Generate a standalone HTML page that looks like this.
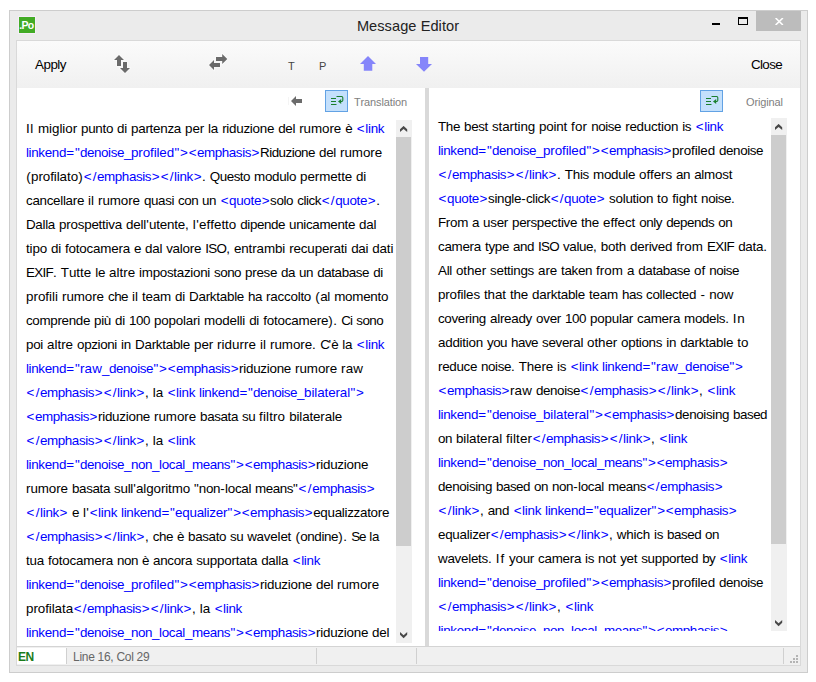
<!DOCTYPE html>
<html lang="en"><head><meta charset="utf-8"><title>Message Editor</title>
<style>
*{margin:0;padding:0;box-sizing:border-box}
html,body{width:816px;height:682px;background:#fff;overflow:hidden}
body{position:relative;font-family:"Liberation Sans",sans-serif;font-size:13px;color:#000}
.a{position:absolute}
#win{left:9px;top:10px;width:799px;height:663px;background:#ebebeb;border:1px solid #cdcdcd}
#ico{left:19px;top:17px;width:16px;height:16px;background:#42ab25;box-shadow:0 0 0 1px #f6eef8;color:#fff;font-weight:bold;font-size:10.5px;line-height:17px;letter-spacing:-0.75px;text-indent:0.3px;white-space:nowrap;overflow:hidden}
#title{left:0;top:15.7px;width:816px;text-align:center;font-size:14.6px;line-height:20px;color:#222;letter-spacing:0.06px}
#min{left:712px;top:23px;width:8px;height:2px;background:#000}
#max{left:738px;top:17px;width:10px;height:8px;border:1px solid #000;border-top-width:2px}
#cls{left:756px;top:11px;width:45px;height:20px;background:#bcbcbc}
#client{left:16px;top:40px;width:785px;height:626px;background:#fff;border:1px solid #d9d9d9}
#tb{left:17px;top:41px;width:783px;height:47px;background:linear-gradient(#fbfbfb,#f0f0f0)}
.tbt{font-size:13px;line-height:16px;color:#000;white-space:nowrap;font-kerning:none;font-variant-ligatures:none}
.tbt i,.hd i,.sm i{font-style:normal}
.sm{font-size:11px;line-height:12px;color:#444;white-space:nowrap}
.hd{font-size:11px;line-height:12px;color:#808080;white-space:nowrap;letter-spacing:-0.13px;font-kerning:none;font-variant-ligatures:none}
.wbtn{width:23px;height:22px;background:#c4e0fc;border:1px solid #62a2e4}
#split{left:425px;top:88px;width:4px;height:558px;background:#d9d9d9}
.sbt{background:#f0f0f0}
.sbh{background:#cdcdcd}
#lt{left:17px;top:120px;width:379px;height:523px;overflow:hidden}
#rt{left:429px;top:118px;width:342px;height:513px;overflow:hidden}
.ln{position:absolute;white-space:pre;height:24px;line-height:24px;font-size:13.4px;color:#000;font-kerning:none;font-variant-ligatures:none;word-spacing:0.28px}
.ln i{font-style:normal}
.ln b{font-weight:normal;color:#0000ff}
#sb{left:17px;top:646px;width:783px;height:19px;background:#f0f0f0;border-top:1px solid #d4d4d4}
.sep{width:1px;background:#d0d0d0;top:648px;height:16px}
.st{font-size:12px;line-height:14px;white-space:nowrap}
.g{width:2px;height:2px;background:#b4b4b4}

</style></head>
<body>
<div id="win" class="a"></div>
<div id="ico" class="a">.Po</div>
<div id="title" class="a">Message Editor</div>
<div id="min" class="a"></div>
<div id="max" class="a"></div>
<div id="cls" class="a"></div>
<svg class="a" style="left:775px;top:18px" width="9" height="7" viewBox="0 0 9 7"><path d="M0.6 0 L7.9 7 M7.9 0 L0.6 7" stroke="#fff" stroke-width="1.6" fill="none"/></svg>
<div id="client" class="a"></div>
<div id="tb" class="a"></div>
<div class="a tbt" style="left:35px;top:57px"><span style="font-size:13.4px;word-spacing:0.28px"><i style="letter-spacing:-0.5px">Apply</i></span></div>
<div class="a tbt" style="left:751px;top:57px"><span style="font-size:13.4px;word-spacing:0.28px"><i style="letter-spacing:-0.65px">Close</i></span></div>
<!-- up/down swap icon -->
<svg class="a" style="left:110px;top:50px" width="24" height="28" viewBox="110 50 24 28">
 <g fill="#6b6b6b" stroke="#ffffff" stroke-opacity="0.7" stroke-width="1.2" paint-order="stroke">
  <path d="M119 55 L124 60 L121 60 L121 66 L117 66 L117 60 L114 60 Z"/>
  <path d="M125 73 L120 68 L123 68 L123 62 L127 62 L127 68 L130 68 Z"/>
 </g>
</svg>
<!-- left/right swap icon -->
<svg class="a" style="left:204px;top:50px" width="28" height="24" viewBox="204 50 28 24">
 <g fill="#6b6b6b" stroke="#ffffff" stroke-opacity="0.7" stroke-width="1.2" paint-order="stroke">
  <path d="M227.3 59 L222.2 54 L222.2 57 L216 57 L216 61 L222.2 61 L222.2 64 Z"/>
  <path d="M209 65 L214 60 L214 63 L220 63 L220 67 L214 67 L214 70 Z"/>
 </g>
</svg>
<div class="a sm" style="left:288px;top:60px">T</div>
<div class="a sm" style="left:319px;top:60px">P</div>
<svg class="a" style="left:358px;top:54px" width="20" height="20" viewBox="358 54 20 20">
 <path d="M368 56 L376 64 L372.3 64 L372.3 70.7 L363.8 70.7 L363.8 64 L360 64 Z" fill="#8585fa"/>
</svg>
<svg class="a" style="left:414px;top:54px" width="20" height="20" viewBox="414 54 20 20">
 <path d="M424 71.7 L416 64 L420 64 L420 57 L428.2 57 L428.2 64 L432 64 Z" fill="#8585fa"/>
</svg>
<!-- pane headers -->
<svg class="a" style="left:288px;top:94px" width="16" height="14" viewBox="288 94 16 14">
 <path d="M291 101 L296 96 L296 99 L302 99 L302 103 L296 103 L296 106 Z" fill="#6b6b6b"/>
</svg>
<div class="a" style="left:288px;top:97px;width:1px;height:8px;background:#f4f4f4"></div>
<div class="a wbtn" style="left:325px;top:90px"></div>
<svg class="a" style="left:325px;top:90px" width="23" height="22" viewBox="0 0 23 22">
 <g stroke="#1a7f2e" stroke-width="1.1" fill="none">
  <path d="M6 8.5 H11 M6 11.5 H11 M6 14.5 H11.5"/>
  <path d="M11.5 6.5 H16.6 Q17.8 6.5 17.8 7.7 V10.3 Q17.8 11.5 16.6 11.5 H15"/>
 </g>
 <path d="M13 11.5 L16.2 8.9 V14.1 Z" fill="#1a7f2e"/>
</svg>
<div class="a hd" style="left:354px;top:96px">Translation</div>
<div class="a wbtn" style="left:700px;top:90px"></div>
<svg class="a" style="left:700px;top:90px" width="23" height="22" viewBox="0 0 23 22">
 <g stroke="#1a7f2e" stroke-width="1.1" fill="none">
  <path d="M6 8.5 H11 M6 11.5 H11 M6 14.5 H11.5"/>
  <path d="M11.5 6.5 H16.6 Q17.8 6.5 17.8 7.7 V10.3 Q17.8 11.5 16.6 11.5 H15"/>
 </g>
 <path d="M13 11.5 L16.2 8.9 V14.1 Z" fill="#1a7f2e"/>
</svg>
<div class="a hd" style="left:746px;top:96px">Original</div>
<div id="split" class="a"></div>
<!-- left scrollbar -->
<div class="a sbt" style="left:396px;top:120px;width:16px;height:523px"></div>
<div class="a sbh" style="left:396px;top:137px;width:15px;height:409px"></div>
<!-- right scrollbar -->
<div class="a sbt" style="left:771px;top:118px;width:16px;height:513px"></div>
<div class="a sbh" style="left:771px;top:135px;width:15px;height:409px"></div>
<svg class="a" style="left:399.8px;top:126px" width="8" height="7" viewBox="0 0 8 7"><path d="M3.6 -0.1 L7.2 3.3 V6.1 L3.6 2.9 L0 6.1 V3.3 Z" fill="#484848"/></svg>
<svg class="a" style="left:399.8px;top:632px" width="8" height="7" viewBox="0 0 8 7"><path d="M0 0 V2.8 L3.6 6.2 L7.2 2.8 V0 L3.6 3.2 Z" fill="#484848"/></svg>
<svg class="a" style="left:774.9px;top:124px" width="8" height="7" viewBox="0 0 8 7"><path d="M3.6 -0.1 L7.2 3.3 V6.1 L3.6 2.9 L0 6.1 V3.3 Z" fill="#484848"/></svg>
<svg class="a" style="left:774.9px;top:619.8px" width="8" height="7" viewBox="0 0 8 7"><path d="M0 0 V2.8 L3.6 6.2 L7.2 2.8 V0 L3.6 3.2 Z" fill="#484848"/></svg>
<div id="lt" class="a">
<div class="ln" style="left:9px;top:-3.5px"><i style="letter-spacing:0.65px">Il</i> <i style="letter-spacing:-0.06px">miglior</i> <i style="letter-spacing:-0.3px">punto</i> <i style="letter-spacing:-0.22px">di</i> <i style="letter-spacing:-0.27px">partenza</i> <i style="letter-spacing:-0.11px">per</i> <i style="letter-spacing:-0.21px">la</i> <i style="letter-spacing:-0.26px">riduzione</i> <i style="letter-spacing:-0.29px">del</i> <i style="letter-spacing:-0.07px">rumore</i> <i style="letter-spacing:-0.44px">è</i> <b><i style="letter-spacing:1.17px;margin:0 -0.58px 0 0.58px">&lt;</i><i style="letter-spacing:-0.27px">link</i></b></div>
<div class="ln" style="left:9px;top:20.5px"><b><i style="letter-spacing:-0.35px">linkend</i><i style="letter-spacing:0.72px;margin:0 -0.36px 0 0.36px">="</i><i style="letter-spacing:-0.42px">denoise</i><i style="letter-spacing:-0.42px">_</i><i style="letter-spacing:-0.11px">profiled</i><i style="letter-spacing:0.86px;margin:0 -0.43px 0 0.43px">"&gt;&lt;</i><i style="letter-spacing:-0.42px">emphasis</i><i style="letter-spacing:1.22px;margin:0 -0.61px 0 0.61px">&gt;</i></b><i style="letter-spacing:-0.51px">Riduzione</i> <i style="letter-spacing:-0.28px">del</i> <i style="letter-spacing:-0.07px">rumore</i></div>
<div class="ln" style="left:9px;top:44.5px"><i style="letter-spacing:0.54px;margin:0 -0.27px 0 0.27px">(</i><i style="letter-spacing:-0.07px">profilato</i><i style="letter-spacing:0.53px;margin:0 -0.27px 0 0.27px">)</i><b><i style="letter-spacing:1.23px;margin:0 -0.61px 0 0.61px">&lt;/</i><i style="letter-spacing:-0.41px">emphasis</i><i style="letter-spacing:1.2px;margin:0 -0.6px 0 0.6px">&gt;&lt;/</i><i style="letter-spacing:-0.27px">link</i><i style="letter-spacing:1.17px;margin:0 -0.58px 0 0.58px">&gt;</i></b>. <i style="letter-spacing:-0.48px">Questo</i> <i style="letter-spacing:-0.32px">modulo</i> <i style="letter-spacing:-0.11px">permette</i> <i style="letter-spacing:-0.2px">di</i></div>
<div class="ln" style="left:9px;top:68.5px"><i style="letter-spacing:-0.3px">cancellare</i> il <i style="letter-spacing:-0.07px">rumore</i> <i style="letter-spacing:-0.4px">quasi</i> <i style="letter-spacing:-0.53px">con</i> <i style="letter-spacing:-0.45px">un</i> <b><i style="letter-spacing:1.18px;margin:0 -0.59px 0 0.59px">&lt;</i><i style="letter-spacing:-0.3px">quote</i><i style="letter-spacing:1.17px;margin:0 -0.58px 0 0.58px">&gt;</i></b><i style="letter-spacing:-0.39px">solo</i> <i style="letter-spacing:-0.41px">click</i><b><i style="letter-spacing:1.23px;margin:0 -0.61px 0 0.61px">&lt;/</i><i style="letter-spacing:-0.3px">quote</i><i style="letter-spacing:1.17px;margin:0 -0.58px 0 0.58px">&gt;</i></b>.</div>
<div class="ln" style="left:9px;top:92.5px"><i style="letter-spacing:-0.3px">Dalla</i> <i style="letter-spacing:-0.23px">prospettiva</i> <i style="letter-spacing:-0.21px">dell</i><i style="letter-spacing:0.44px;margin:0 -0.22px 0 0.22px">'</i><i style="letter-spacing:-0.2px">utente</i>, l<i style="letter-spacing:0.72px;margin:0 -0.36px 0 0.36px">'</i>effetto <i style="letter-spacing:-0.41px">dipende</i> <i style="letter-spacing:-0.33px">unicamente</i> <i style="letter-spacing:-0.28px">dal</i></div>
<div class="ln" style="left:9px;top:116.5px"><i style="letter-spacing:-0.15px">tipo</i> <i style="letter-spacing:-0.21px">di</i> <i style="letter-spacing:-0.2px">fotocamera</i> <i style="letter-spacing:-0.43px">e</i> <i style="letter-spacing:-0.29px">dal</i> <i style="letter-spacing:-0.25px">valore</i> <i style="letter-spacing:-0.68px">ISO</i>, <i style="letter-spacing:-0.1px">entrambi</i> <i style="letter-spacing:-0.16px">recuperati</i> <i style="letter-spacing:-0.28px">dai</i> <i style="letter-spacing:-0.15px">dati</i></div>
<div class="ln" style="left:9px;top:140.5px"><i style="letter-spacing:-0.69px">EXIF</i>. Tutte <i style="letter-spacing:-0.33px">le</i> altre <i style="letter-spacing:-0.29px">impostazioni</i> <i style="letter-spacing:-0.51px">sono</i> <i style="letter-spacing:-0.3px">prese</i> <i style="letter-spacing:-0.45px">da</i> <i style="letter-spacing:-0.45px">un</i> <i style="letter-spacing:-0.39px">database</i> <i style="letter-spacing:-0.2px">di</i></div>
<div class="ln" style="left:9px;top:164.5px">profili <i style="letter-spacing:-0.07px">rumore</i> <i style="letter-spacing:-0.53px">che</i> il <i style="letter-spacing:-0.18px">team</i> <i style="letter-spacing:-0.21px">di</i> <i style="letter-spacing:-0.26px">Darktable</i> <i style="letter-spacing:-0.44px">ha</i> <i style="letter-spacing:-0.24px">raccolto</i> <i style="letter-spacing:0.57px;margin:0 -0.28px 0 0.28px">(</i><i style="letter-spacing:-0.21px">al</i> <i style="letter-spacing:-0.26px">momento</i></div>
<div class="ln" style="left:9px;top:188.5px"><i style="letter-spacing:-0.33px">comprende</i> <i style="letter-spacing:-0.3px">più</i> <i style="letter-spacing:-0.21px">di</i> <i style="letter-spacing:-0.45px">100</i> <i style="letter-spacing:-0.21px">popolari</i> <i style="letter-spacing:-0.2px">modelli</i> <i style="letter-spacing:-0.21px">di</i> <i style="letter-spacing:-0.2px">fotocamere</i><i style="letter-spacing:0.42px;margin:0 -0.21px 0 0.21px">).</i> <i style="letter-spacing:-0.82px">Ci</i> <i style="letter-spacing:-0.51px">sono</i></div>
<div class="ln" style="left:9px;top:212.5px"><i style="letter-spacing:-0.29px">poi</i> altre <i style="letter-spacing:-0.36px">opzioni</i> <i style="letter-spacing:-0.2px">in</i> <i style="letter-spacing:-0.26px">Darktable</i> <i style="letter-spacing:-0.11px">per</i> <i style="letter-spacing:0.04px">ridurre</i> il <i style="letter-spacing:-0.06px">rumore</i><i style="letter-spacing:0.3px">.</i> <i style="letter-spacing:-1.67px">C</i><i style="letter-spacing:0.44px;margin:0 -0.22px 0 0.22px">'</i><i style="letter-spacing:-0.44px">è</i> <i style="letter-spacing:-0.21px">la</i> <b><i style="letter-spacing:1.17px;margin:0 -0.58px 0 0.58px">&lt;</i><i style="letter-spacing:-0.27px">link</i></b></div>
<div class="ln" style="left:9px;top:236.5px"><b><i style="letter-spacing:-0.35px">linkend</i><i style="letter-spacing:0.72px;margin:0 -0.36px 0 0.36px">="</i><i style="letter-spacing:0.14px">raw</i><i style="letter-spacing:-0.45px">_</i><i style="letter-spacing:-0.41px">denoise</i><i style="letter-spacing:0.86px;margin:0 -0.43px 0 0.43px">"&gt;&lt;</i><i style="letter-spacing:-0.41px">emphasis</i><i style="letter-spacing:1.14px;margin:0 -0.57px 0 0.57px">&gt;</i></b><i style="letter-spacing:-0.26px">riduzione</i> <i style="letter-spacing:-0.07px">rumore</i> <i style="letter-spacing:0.14px">raw</i></div>
<div class="ln" style="left:9px;top:260.5px"><b><i style="letter-spacing:1.23px;margin:0 -0.61px 0 0.61px">&lt;/</i><i style="letter-spacing:-0.41px">emphasis</i><i style="letter-spacing:1.2px;margin:0 -0.6px 0 0.6px">&gt;&lt;/</i><i style="letter-spacing:-0.27px">link</i><i style="letter-spacing:1.17px;margin:0 -0.58px 0 0.58px">&gt;</i></b>, la <b><i style="letter-spacing:1.04px;margin:0 -0.52px 0 0.52px">&lt;</i><i style="letter-spacing:-0.27px">link</i> <i style="letter-spacing:-0.35px">linkend</i><i style="letter-spacing:0.71px;margin:0 -0.35px 0 0.35px">="</i><i style="letter-spacing:-0.42px">denoise</i><i style="letter-spacing:-0.41px">_</i><i style="letter-spacing:-0.1px">bilateral</i><i style="letter-spacing:0.71px;margin:0 -0.35px 0 0.35px">"&gt;</i></b></div>
<div class="ln" style="left:9px;top:284.5px"><b><i style="letter-spacing:1.18px;margin:0 -0.59px 0 0.59px">&lt;</i><i style="letter-spacing:-0.41px">emphasis</i><i style="letter-spacing:1.15px;margin:0 -0.57px 0 0.57px">&gt;</i></b><i style="letter-spacing:-0.26px">riduzione</i> <i style="letter-spacing:-0.07px">rumore</i> <i style="letter-spacing:-0.37px">basata</i> <i style="letter-spacing:-0.57px">su</i> <i style="letter-spacing:0.12px">filtro</i> <i style="letter-spacing:-0.14px">bilaterale</i></div>
<div class="ln" style="left:9px;top:308.5px"><b><i style="letter-spacing:1.23px;margin:0 -0.61px 0 0.61px">&lt;/</i><i style="letter-spacing:-0.41px">emphasis</i><i style="letter-spacing:1.2px;margin:0 -0.6px 0 0.6px">&gt;&lt;/</i><i style="letter-spacing:-0.27px">link</i><i style="letter-spacing:1.17px;margin:0 -0.58px 0 0.58px">&gt;</i></b>, la <b><i style="letter-spacing:1.04px;margin:0 -0.52px 0 0.52px">&lt;</i><i style="letter-spacing:-0.27px">link</i></b></div>
<div class="ln" style="left:9px;top:332.5px"><b><i style="letter-spacing:-0.35px">linkend</i><i style="letter-spacing:0.72px;margin:0 -0.36px 0 0.36px">="</i><i style="letter-spacing:-0.42px">denoise</i><i style="letter-spacing:-0.42px">_</i><i style="letter-spacing:-0.45px">non</i><i style="letter-spacing:-0.44px">_</i><i style="letter-spacing:-0.31px">local</i><i style="letter-spacing:-0.44px">_</i><i style="letter-spacing:-0.44px">means</i><i style="letter-spacing:0.87px;margin:0 -0.43px 0 0.43px">"&gt;&lt;</i><i style="letter-spacing:-0.41px">emphasis</i><i style="letter-spacing:1.16px;margin:0 -0.58px 0 0.58px">&gt;</i></b><i style="letter-spacing:-0.26px">riduzione</i></div>
<div class="ln" style="left:9px;top:356.5px"><i style="letter-spacing:-0.07px">rumore</i> <i style="letter-spacing:-0.37px">basata</i> <i style="letter-spacing:-0.27px">sull</i><i style="letter-spacing:0.44px;margin:0 -0.22px 0 0.22px">'</i><i style="letter-spacing:-0.12px">algoritmo</i> "<i style="letter-spacing:-0.36px">non</i><i style="letter-spacing:0.53px;margin:0 -0.27px 0 0.27px">-</i><i style="letter-spacing:-0.31px">local</i> <i style="letter-spacing:-0.44px">means</i>"<b><i style="letter-spacing:1.36px;margin:0 -0.68px 0 0.68px">&lt;/</i><i style="letter-spacing:-0.41px">emphasis</i><i style="letter-spacing:1.15px;margin:0 -0.57px 0 0.57px">&gt;</i></b></div>
<div class="ln" style="left:9px;top:380.5px"><b><i style="letter-spacing:1.23px;margin:0 -0.61px 0 0.61px">&lt;/</i><i style="letter-spacing:-0.27px">link</i><i style="letter-spacing:1.17px;margin:0 -0.58px 0 0.58px">&gt;</i></b> <i style="letter-spacing:-0.45px">e</i> l<i style="letter-spacing:0.46px;margin:0 -0.23px 0 0.23px">'</i><b><i style="letter-spacing:1.18px;margin:0 -0.59px 0 0.59px">&lt;</i><i style="letter-spacing:-0.27px">link</i> <i style="letter-spacing:-0.35px">linkend</i><i style="letter-spacing:0.71px;margin:0 -0.35px 0 0.35px">="</i><i style="letter-spacing:-0.26px">equalizer</i><i style="letter-spacing:0.87px;margin:0 -0.43px 0 0.43px">"&gt;&lt;</i><i style="letter-spacing:-0.41px">emphasis</i><i style="letter-spacing:1.15px;margin:0 -0.57px 0 0.57px">&gt;</i></b><i style="letter-spacing:-0.28px">equalizzatore</i></div>
<div class="ln" style="left:9px;top:404.5px"><b><i style="letter-spacing:1.23px;margin:0 -0.61px 0 0.61px">&lt;/</i><i style="letter-spacing:-0.41px">emphasis</i><i style="letter-spacing:1.2px;margin:0 -0.6px 0 0.6px">&gt;&lt;/</i><i style="letter-spacing:-0.27px">link</i><i style="letter-spacing:1.17px;margin:0 -0.58px 0 0.58px">&gt;</i></b>, <i style="letter-spacing:-0.44px">che</i> <i style="letter-spacing:-0.44px">è</i> <i style="letter-spacing:-0.37px">basato</i> <i style="letter-spacing:-0.57px">su</i> <i style="letter-spacing:-0.2px">wavelet</i> <i style="letter-spacing:0.54px;margin:0 -0.27px 0 0.27px">(</i><i style="letter-spacing:-0.37px">ondine</i><i style="letter-spacing:0.41px;margin:0 -0.2px 0 0.2px">).</i> <i style="letter-spacing:-1.19px">Se</i> <i style="letter-spacing:-0.21px">la</i></div>
<div class="ln" style="left:9px;top:428.5px"><i style="letter-spacing:-0.21px">tua</i> <i style="letter-spacing:-0.2px">fotocamera</i> <i style="letter-spacing:-0.44px">non</i> <i style="letter-spacing:-0.45px">è</i> <i style="letter-spacing:-0.32px">ancora</i> <i style="letter-spacing:-0.23px">supportata</i> <i style="letter-spacing:-0.26px">dalla</i> <b><i style="letter-spacing:1.17px;margin:0 -0.58px 0 0.58px">&lt;</i><i style="letter-spacing:-0.27px">link</i></b></div>
<div class="ln" style="left:9px;top:452.5px"><b><i style="letter-spacing:-0.35px">linkend</i><i style="letter-spacing:0.72px;margin:0 -0.36px 0 0.36px">="</i><i style="letter-spacing:-0.42px">denoise</i><i style="letter-spacing:-0.42px">_</i><i style="letter-spacing:-0.11px">profiled</i><i style="letter-spacing:0.86px;margin:0 -0.43px 0 0.43px">"&gt;&lt;</i><i style="letter-spacing:-0.42px">emphasis</i><i style="letter-spacing:1.22px;margin:0 -0.61px 0 0.61px">&gt;</i></b><i style="letter-spacing:-0.26px">riduzione</i> <i style="letter-spacing:-0.29px">del</i> <i style="letter-spacing:-0.07px">rumore</i></div>
<div class="ln" style="left:9px;top:476.5px"><i style="letter-spacing:-0.07px">profilata</i><b><i style="letter-spacing:1.22px;margin:0 -0.61px 0 0.61px">&lt;/</i><i style="letter-spacing:-0.41px">emphasis</i><i style="letter-spacing:1.2px;margin:0 -0.6px 0 0.6px">&gt;&lt;/</i><i style="letter-spacing:-0.27px">link</i><i style="letter-spacing:1.18px;margin:0 -0.59px 0 0.59px">&gt;</i></b>, la <b><i style="letter-spacing:1.03px;margin:0 -0.52px 0 0.52px">&lt;</i><i style="letter-spacing:-0.27px">link</i></b></div>
<div class="ln" style="left:9px;top:500.5px"><b><i style="letter-spacing:-0.35px">linkend</i><i style="letter-spacing:0.72px;margin:0 -0.36px 0 0.36px">="</i><i style="letter-spacing:-0.42px">denoise</i><i style="letter-spacing:-0.42px">_</i><i style="letter-spacing:-0.45px">non</i><i style="letter-spacing:-0.44px">_</i><i style="letter-spacing:-0.31px">local</i><i style="letter-spacing:-0.44px">_</i><i style="letter-spacing:-0.44px">means</i><i style="letter-spacing:0.87px;margin:0 -0.43px 0 0.43px">"&gt;&lt;</i><i style="letter-spacing:-0.41px">emphasis</i><i style="letter-spacing:1.16px;margin:0 -0.58px 0 0.58px">&gt;</i></b><i style="letter-spacing:-0.26px">riduzione</i> <i style="letter-spacing:-0.29px">del</i></div>
</div>
<div id="rt" class="a">
<div class="ln" style="left:9px;top:-3.5px"><i style="letter-spacing:-0.36px">The</i> <i style="letter-spacing:-0.33px">best</i> <i style="letter-spacing:-0.11px">starting</i> <i style="letter-spacing:-0.21px">point</i> <i style="letter-spacing:0.12px">for</i> <i style="letter-spacing:-0.4px">noise</i> <i style="letter-spacing:-0.23px">reduction</i> <i style="letter-spacing:-0.35px">is</i> <b><i style="letter-spacing:1.17px;margin:0 -0.58px 0 0.58px">&lt;</i><i style="letter-spacing:-0.27px">link</i></b></div>
<div class="ln" style="left:9px;top:20.5px"><b><i style="letter-spacing:-0.35px">linkend</i><i style="letter-spacing:0.72px;margin:0 -0.36px 0 0.36px">="</i><i style="letter-spacing:-0.42px">denoise</i><i style="letter-spacing:-0.42px">_</i><i style="letter-spacing:-0.11px">profiled</i><i style="letter-spacing:0.86px;margin:0 -0.43px 0 0.43px">"&gt;&lt;</i><i style="letter-spacing:-0.42px">emphasis</i><i style="letter-spacing:1.22px;margin:0 -0.61px 0 0.61px">&gt;</i></b><i style="letter-spacing:-0.12px">profiled</i> <i style="letter-spacing:-0.41px">denoise</i></div>
<div class="ln" style="left:9px;top:44.5px"><b><i style="letter-spacing:1.23px;margin:0 -0.61px 0 0.61px">&lt;/</i><i style="letter-spacing:-0.41px">emphasis</i><i style="letter-spacing:1.2px;margin:0 -0.6px 0 0.6px">&gt;&lt;/</i><i style="letter-spacing:-0.27px">link</i><i style="letter-spacing:1.17px;margin:0 -0.58px 0 0.58px">&gt;</i></b>. <i style="letter-spacing:-0.25px">This</i> <i style="letter-spacing:-0.32px">module</i> <i style="letter-spacing:-0.09px">offers</i> <i style="letter-spacing:-0.43px">an</i> <i style="letter-spacing:-0.24px">almost</i></div>
<div class="ln" style="left:9px;top:68.5px"><b><i style="letter-spacing:1.18px;margin:0 -0.59px 0 0.59px">&lt;</i><i style="letter-spacing:-0.3px">quote</i><i style="letter-spacing:1.17px;margin:0 -0.58px 0 0.58px">&gt;</i></b><i style="letter-spacing:-0.33px">single</i><i style="letter-spacing:0.53px;margin:0 -0.27px 0 0.27px">-</i><i style="letter-spacing:-0.41px">click</i><b><i style="letter-spacing:1.24px;margin:0 -0.62px 0 0.62px">&lt;/</i><i style="letter-spacing:-0.3px">quote</i><i style="letter-spacing:1.16px;margin:0 -0.58px 0 0.58px">&gt;</i></b> <i style="letter-spacing:-0.27px">solution</i> to <i style="letter-spacing:-0.1px">fight</i> <i style="letter-spacing:-0.4px">noise</i>.</div>
<div class="ln" style="left:9px;top:92.5px"><i style="letter-spacing:-0.31px">From</i> <i style="letter-spacing:-0.45px">a</i> <i style="letter-spacing:-0.26px">user</i> <i style="letter-spacing:-0.32px">perspective</i> <i style="letter-spacing:-0.2px">the</i> <i style="letter-spacing:-0.12px">effect</i> <i style="letter-spacing:-0.4px">only</i> <i style="letter-spacing:-0.48px">depends</i> <i style="letter-spacing:-0.45px">on</i></div>
<div class="ln" style="left:9px;top:116.5px"><i style="letter-spacing:-0.28px">camera</i> <i style="letter-spacing:-0.32px">type</i> <i style="letter-spacing:-0.45px">and</i> <i style="letter-spacing:-0.69px">ISO</i> <i style="letter-spacing:-0.4px">value</i>, <i style="letter-spacing:-0.2px">both</i> <i style="letter-spacing:-0.27px">derived</i> from <i style="letter-spacing:-0.65px">EXIF</i> <i style="letter-spacing:-0.26px">data</i>.</div>
<div class="ln" style="left:9px;top:140.5px"><i style="letter-spacing:-0.29px">All</i> <i style="letter-spacing:-0.11px">other</i> <i style="letter-spacing:-0.27px">settings</i> <i style="letter-spacing:-0.11px">are</i> <i style="letter-spacing:-0.35px">taken</i> from a <i style="letter-spacing:-0.42px">database</i> of <i style="letter-spacing:-0.43px">noise</i></div>
<div class="ln" style="left:9px;top:164.5px"><i style="letter-spacing:-0.15px">profiles</i> <i style="letter-spacing:-0.08px">that</i> <i style="letter-spacing:-0.2px">the</i> <i style="letter-spacing:-0.23px">darktable</i> <i style="letter-spacing:-0.2px">team</i> <i style="letter-spacing:-0.53px">has</i> <i style="letter-spacing:-0.32px">collected</i> <i style="letter-spacing:0.57px;margin:0 -0.28px 0 0.28px">-</i> <i style="letter-spacing:-0.19px">now</i></div>
<div class="ln" style="left:9px;top:188.5px"><i style="letter-spacing:-0.33px">covering</i> <i style="letter-spacing:-0.27px">already</i> <i style="letter-spacing:-0.26px">over</i> <i style="letter-spacing:-0.45px">100</i> <i style="letter-spacing:-0.24px">popular</i> <i style="letter-spacing:-0.28px">camera</i> <i style="letter-spacing:-0.36px">models</i>. <i style="letter-spacing:0.56px">In</i></div>
<div class="ln" style="left:9px;top:212.5px"><i style="letter-spacing:-0.24px">addition</i> <i style="letter-spacing:-0.53px">you</i> <i style="letter-spacing:-0.51px">have</i> <i style="letter-spacing:-0.31px">several</i> <i style="letter-spacing:-0.1px">other</i> <i style="letter-spacing:-0.31px">options</i> <i style="letter-spacing:-0.23px">in</i> <i style="letter-spacing:-0.23px">darktable</i> to</div>
<div class="ln" style="left:9px;top:236.5px"><i style="letter-spacing:-0.32px">reduce</i> <i style="letter-spacing:-0.41px">noise</i>. <i style="letter-spacing:-0.14px">There</i> <i style="letter-spacing:-0.33px">is</i> <b><i style="letter-spacing:1.17px;margin:0 -0.58px 0 0.58px">&lt;</i><i style="letter-spacing:-0.27px">link</i> <i style="letter-spacing:-0.35px">linkend</i><i style="letter-spacing:0.71px;margin:0 -0.35px 0 0.35px">="</i><i style="letter-spacing:0.14px">raw</i><i style="letter-spacing:-0.44px">_</i><i style="letter-spacing:-0.41px">denoise</i><i style="letter-spacing:0.7px;margin:0 -0.35px 0 0.35px">"&gt;</i></b></div>
<div class="ln" style="left:9px;top:260.5px"><b><i style="letter-spacing:1.18px;margin:0 -0.59px 0 0.59px">&lt;</i><i style="letter-spacing:-0.41px">emphasis</i><i style="letter-spacing:1.15px;margin:0 -0.57px 0 0.57px">&gt;</i></b><i style="letter-spacing:0.14px">raw</i> <i style="letter-spacing:-0.42px">denoise</i><b><i style="letter-spacing:1.24px;margin:0 -0.62px 0 0.62px">&lt;/</i><i style="letter-spacing:-0.41px">emphasis</i><i style="letter-spacing:1.21px;margin:0 -0.6px 0 0.6px">&gt;&lt;/</i><i style="letter-spacing:-0.28px">link</i><i style="letter-spacing:1.19px;margin:0 -0.59px 0 0.59px">&gt;</i></b>, <b><i style="letter-spacing:1.46px;margin:0 -0.73px 0 0.73px">&lt;</i><i style="letter-spacing:-0.27px">link</i></b></div>
<div class="ln" style="left:9px;top:284.5px"><b><i style="letter-spacing:-0.35px">linkend</i><i style="letter-spacing:0.72px;margin:0 -0.36px 0 0.36px">="</i><i style="letter-spacing:-0.42px">denoise</i><i style="letter-spacing:-0.42px">_</i><i style="letter-spacing:-0.1px">bilateral</i><i style="letter-spacing:0.87px;margin:0 -0.43px 0 0.43px">"&gt;&lt;</i><i style="letter-spacing:-0.41px">emphasis</i><i style="letter-spacing:1.15px;margin:0 -0.57px 0 0.57px">&gt;</i></b><i style="letter-spacing:-0.37px">denoising</i> <i style="letter-spacing:-0.5px">based</i></div>
<div class="ln" style="left:9px;top:308.5px"><i style="letter-spacing:-0.45px">on</i> <i style="letter-spacing:-0.1px">bilateral</i> <i style="letter-spacing:0.12px">filter</i><b><i style="letter-spacing:1.22px;margin:0 -0.61px 0 0.61px">&lt;/</i><i style="letter-spacing:-0.41px">emphasis</i><i style="letter-spacing:1.2px;margin:0 -0.6px 0 0.6px">&gt;&lt;/</i><i style="letter-spacing:-0.27px">link</i><i style="letter-spacing:1.18px;margin:0 -0.59px 0 0.59px">&gt;</i></b>, <b><i style="letter-spacing:1.46px;margin:0 -0.73px 0 0.73px">&lt;</i><i style="letter-spacing:-0.27px">link</i></b></div>
<div class="ln" style="left:9px;top:332.5px"><b><i style="letter-spacing:-0.35px">linkend</i><i style="letter-spacing:0.72px;margin:0 -0.36px 0 0.36px">="</i><i style="letter-spacing:-0.42px">denoise</i><i style="letter-spacing:-0.42px">_</i><i style="letter-spacing:-0.45px">non</i><i style="letter-spacing:-0.44px">_</i><i style="letter-spacing:-0.31px">local</i><i style="letter-spacing:-0.44px">_</i><i style="letter-spacing:-0.44px">means</i><i style="letter-spacing:0.87px;margin:0 -0.43px 0 0.43px">"&gt;&lt;</i><i style="letter-spacing:-0.41px">emphasis</i><i style="letter-spacing:1.16px;margin:0 -0.58px 0 0.58px">&gt;</i></b></div>
<div class="ln" style="left:9px;top:356.5px"><i style="letter-spacing:-0.37px">denoising</i> <i style="letter-spacing:-0.5px">based</i> <i style="letter-spacing:-0.44px">on</i> <i style="letter-spacing:-0.45px">non</i><i style="letter-spacing:0.54px;margin:0 -0.27px 0 0.27px">-</i><i style="letter-spacing:-0.31px">local</i> <i style="letter-spacing:-0.44px">means</i><b><i style="letter-spacing:1.24px;margin:0 -0.62px 0 0.62px">&lt;/</i><i style="letter-spacing:-0.41px">emphasis</i><i style="letter-spacing:1.14px;margin:0 -0.57px 0 0.57px">&gt;</i></b></div>
<div class="ln" style="left:9px;top:380.5px"><b><i style="letter-spacing:1.23px;margin:0 -0.61px 0 0.61px">&lt;/</i><i style="letter-spacing:-0.27px">link</i><i style="letter-spacing:1.17px;margin:0 -0.58px 0 0.58px">&gt;</i></b>, <i style="letter-spacing:-0.36px">and</i> <b><i style="letter-spacing:1.19px;margin:0 -0.59px 0 0.59px">&lt;</i><i style="letter-spacing:-0.27px">link</i> <i style="letter-spacing:-0.35px">linkend</i><i style="letter-spacing:0.71px;margin:0 -0.35px 0 0.35px">="</i><i style="letter-spacing:-0.26px">equalizer</i><i style="letter-spacing:0.87px;margin:0 -0.43px 0 0.43px">"&gt;&lt;</i><i style="letter-spacing:-0.41px">emphasis</i><i style="letter-spacing:1.15px;margin:0 -0.57px 0 0.57px">&gt;</i></b></div>
<div class="ln" style="left:9px;top:404.5px"><i style="letter-spacing:-0.26px">equalizer</i><b><i style="letter-spacing:1.23px;margin:0 -0.61px 0 0.61px">&lt;/</i><i style="letter-spacing:-0.41px">emphasis</i><i style="letter-spacing:1.2px;margin:0 -0.6px 0 0.6px">&gt;&lt;/</i><i style="letter-spacing:-0.27px">link</i><i style="letter-spacing:1.17px;margin:0 -0.58px 0 0.58px">&gt;</i></b>, <i style="letter-spacing:-0.19px">which</i> <i style="letter-spacing:-0.34px">is</i> <i style="letter-spacing:-0.5px">based</i> <i style="letter-spacing:-0.44px">on</i></div>
<div class="ln" style="left:9px;top:428.5px"><i style="letter-spacing:-0.26px">wavelets</i>. <i style="letter-spacing:0.91px">If</i> <i style="letter-spacing:-0.26px">your</i> <i style="letter-spacing:-0.28px">camera</i> <i style="letter-spacing:-0.33px">is</i> <i style="letter-spacing:-0.21px">not</i> <i style="letter-spacing:-0.28px">yet</i> <i style="letter-spacing:-0.29px">supported</i> <i style="letter-spacing:-0.55px">by</i> <b><i style="letter-spacing:1.17px;margin:0 -0.58px 0 0.58px">&lt;</i><i style="letter-spacing:-0.27px">link</i></b></div>
<div class="ln" style="left:9px;top:452.5px"><b><i style="letter-spacing:-0.35px">linkend</i><i style="letter-spacing:0.72px;margin:0 -0.36px 0 0.36px">="</i><i style="letter-spacing:-0.42px">denoise</i><i style="letter-spacing:-0.42px">_</i><i style="letter-spacing:-0.11px">profiled</i><i style="letter-spacing:0.86px;margin:0 -0.43px 0 0.43px">"&gt;&lt;</i><i style="letter-spacing:-0.42px">emphasis</i><i style="letter-spacing:1.22px;margin:0 -0.61px 0 0.61px">&gt;</i></b><i style="letter-spacing:-0.12px">profiled</i> <i style="letter-spacing:-0.41px">denoise</i></div>
<div class="ln" style="left:9px;top:476.5px"><b><i style="letter-spacing:1.23px;margin:0 -0.61px 0 0.61px">&lt;/</i><i style="letter-spacing:-0.41px">emphasis</i><i style="letter-spacing:1.2px;margin:0 -0.6px 0 0.6px">&gt;&lt;/</i><i style="letter-spacing:-0.27px">link</i><i style="letter-spacing:1.17px;margin:0 -0.58px 0 0.58px">&gt;</i></b>, <b><i style="letter-spacing:1.46px;margin:0 -0.73px 0 0.73px">&lt;</i><i style="letter-spacing:-0.27px">link</i></b></div>
<div class="ln" style="left:9px;top:500.5px"><b><i style="letter-spacing:-0.35px">linkend</i><i style="letter-spacing:0.72px;margin:0 -0.36px 0 0.36px">="</i><i style="letter-spacing:-0.42px">denoise</i><i style="letter-spacing:-0.42px">_</i><i style="letter-spacing:-0.45px">non</i><i style="letter-spacing:-0.44px">_</i><i style="letter-spacing:-0.31px">local</i><i style="letter-spacing:-0.44px">_</i><i style="letter-spacing:-0.44px">means</i><i style="letter-spacing:0.87px;margin:0 -0.43px 0 0.43px">"&gt;&lt;</i><i style="letter-spacing:-0.41px">emphasis</i><i style="letter-spacing:1.16px;margin:0 -0.58px 0 0.58px">&gt;</i></b></div>
</div>
<!-- status bar -->
<div id="sb" class="a"></div>
<div class="a" style="left:17px;top:648px;width:49px;height:16px;background:#fff"></div>
<div class="a st" style="left:18px;top:650px;color:#1b7c1b;font-weight:bold;letter-spacing:-0.55px">EN</div>
<div class="a sep" style="left:66px"></div>
<div class="a st" style="left:73px;top:650px;color:#666;letter-spacing:-0.29px">Line 16, Col 29</div>
<div class="a sep" style="left:316px"></div>
<div class="a sep" style="left:416px"></div>
<div class="a sep" style="left:783px"></div>
<div class="a g" style="left:796px;top:655px"></div>
<div class="a g" style="left:793px;top:658px"></div>
<div class="a g" style="left:796px;top:658px"></div>
<div class="a g" style="left:790px;top:661px"></div>
<div class="a g" style="left:793px;top:661px"></div>
<div class="a g" style="left:796px;top:661px"></div>

</body></html>
